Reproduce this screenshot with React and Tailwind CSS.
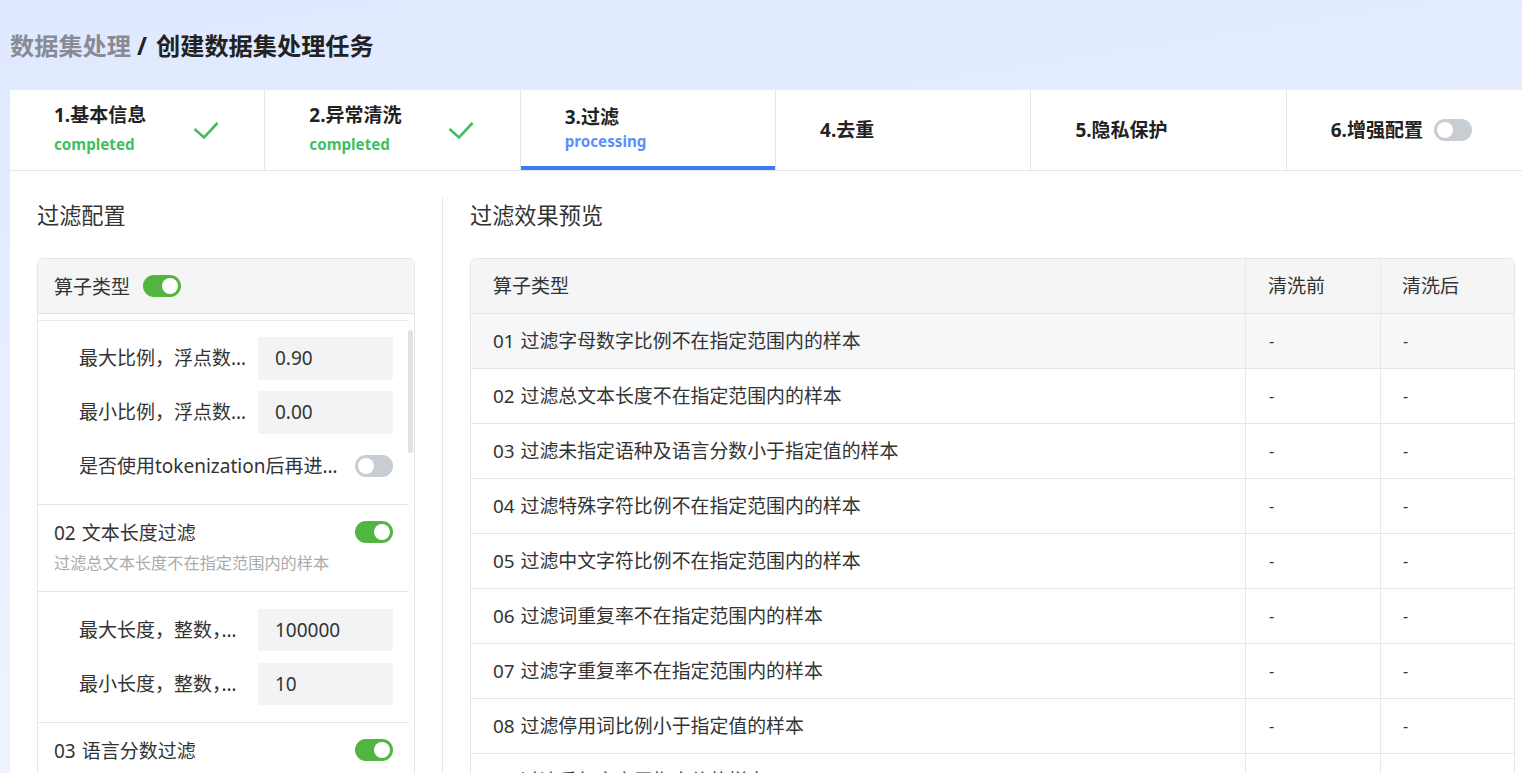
import React from 'react';

const Toggle = ({ on }) => (
  <div className={`flex h-[22px] w-[38px] shrink-0 items-center rounded-full px-[3px] ${on ? 'justify-end bg-[#52b541]' : 'justify-start bg-[#c8ccd3]'}`}>
    <div className="h-4 w-4 rounded-full bg-white" />
  </div>
);

const Check = () => (
  <svg width="28" height="20" viewBox="0 0 28 20" fill="none" className="shrink-0">
    <path d="M2.5 9 L12 17.5 L25.5 3" stroke="#3fbf62" strokeWidth="2.6" />
  </svg>
);

const steps = [
  { title: '1.基本信息', sub: 'completed', done: true },
  { title: '2.异常清洗', sub: 'completed', done: true },
  { title: '3.过滤', sub: 'processing', active: true },
  { title: '4.去重' },
  { title: '5.隐私保护' },
  { title: '6.增强配置', toggle: true },
];

const rows = [
  '01 过滤字母数字比例不在指定范围内的样本',
  '02 过滤总文本长度不在指定范围内的样本',
  '03 过滤未指定语种及语言分数小于指定值的样本',
  '04 过滤特殊字符比例不在指定范围内的样本',
  '05 过滤中文字符比例不在指定范围内的样本',
  '06 过滤词重复率不在指定范围内的样本',
  '07 过滤字重复率不在指定范围内的样本',
  '08 过滤停用词比例小于指定值的样本',
  '09 过滤重复率高于指定值的样本',
];

const Field = ({ label, value, tall }) => (
  <div className={`flex items-center justify-between ${tall ? 'h-[43px]' : 'h-[42px]'}`}>
    <div className="w-[172px] truncate text-[19px] text-[#333]">{label}</div>
    <div className="flex h-full w-[135px] items-center rounded-[3px] bg-[#f2f3f5] pl-[17px] text-[19px] text-[#333]">{value}</div>
  </div>
);

const Step = ({ step }) => (
  <div className="relative flex h-full w-[255.35px] shrink-0 items-center border-r border-[#e8e9eb] pl-[44px]">
    <div className={step.done || step.active ? `-translate-y-[2px] ${step.done ? 'w-[138px]' : ''}` : ''}>
      <div className="text-[19px] font-bold leading-[26px] text-[#222]">{step.title}</div>
      {step.sub && (
        <div className={`text-[15.2px] font-bold leading-[22px] ${step.active ? 'text-[#5b8ff9]' : 'mt-[5px] text-[#3fbf62]'}`}>{step.sub}</div>
      )}
    </div>
    {step.done && <Check />}
    {step.toggle && <div className="ml-[11px]"><Toggle /></div>}
    {step.active && <div className="absolute bottom-0 left-0 right-0 h-1 bg-[#3b7bf6]" />}
  </div>
);

export default function App() {
  return (
    <div className="h-[773px] w-full overflow-hidden bg-[linear-gradient(171deg,#dfe9ff,#f2f6ff)] font-['Noto_Sans','Noto_Sans_CJK_SC',sans-serif]">
      <div className="flex h-[90px] items-center pl-[10px] pt-[2px] text-[24.2px] font-bold text-[#222]">
        <span className="text-[#888b94]">数据集处理</span>
        <span className="ml-[6px]">/</span>
        <span className="ml-[9px]">创建数据集处理任务</span>
      </div>

      <div className="ml-[10px] h-[683px] bg-white">
        <div className="flex h-[81px] overflow-hidden border-b border-[#e5e6e8]">
          {steps.map(s => <Step key={s.title} step={s} />)}
        </div>

        <div className="flex pt-[27px]">
          <div className="w-[433px] shrink-0 border-r border-[#e5e6e8] px-[27px]">
            <h2 className="h-[60px] text-[22.2px] font-normal leading-[35px] text-[#333]">过滤配置</h2>
            <div className="relative h-[600px] w-[378px] overflow-hidden rounded-t-[6px] border border-[#e5e6e8]">
              <div className="flex h-[55px] items-center gap-[13px] border-b border-[#e0e1e3] bg-[#f5f5f5] pl-4 text-[19px] text-[#333]">
                <span className="pt-[2px]">算子类型</span>
                <Toggle on />
              </div>
              <div className="mr-[5px]">
                <div className="mt-[6px] border-t border-[#e8e9eb] pb-[27px] pl-[41px] pr-[16px] pt-4">
                  <div className="flex flex-col gap-[11px]">
                    <Field tall label="最大比例，浮点数类型，范围" value="0.90" />
                    <Field tall label="最小比例，浮点数类型，范围" value="0.00" />
                  </div>
                  <div className="mt-[21px] flex items-center justify-between">
                    <div className="w-[262px] truncate text-[19px] leading-[22px] text-[#333]">是否使用tokenization后再进行计算</div>
                    <Toggle />
                  </div>
                </div>
                <div className="border-t border-[#e5e6e8] px-4 pb-[17px] pt-4">
                  <div className="flex h-[22px] items-center justify-between text-[19px] text-[#333] [word-spacing:1px]">
                    <span className="pt-[2px]">02 文本长度过滤</span>
                    <Toggle on />
                  </div>
                  <div className="mt-[9px] text-[16.2px] leading-[22px] text-[#aaa]">过滤总文本长度不在指定范围内的样本</div>
                </div>
                <div className="border-t border-[#e5e6e8] pb-[17px] pl-[41px] pr-[16px] pt-[17px]">
                  <div className="flex flex-col gap-3">
                    <Field label="最大长度，整数，　范围为正整数" value="100000" />
                    <Field label="最小长度，整数，　范围为正整数" value="10" />
                  </div>
                </div>
                <div className="border-t border-[#e5e6e8] px-4 pb-4 pt-4">
                  <div className="flex h-[22px] items-center justify-between text-[19px] text-[#333] [word-spacing:1px]">
                    <span className="pt-[2px]">03 语言分数过滤</span>
                    <Toggle on />
                  </div>
                </div>
              </div>
              <div className="absolute right-[1px] top-[71px] h-[123px] w-[5px] rounded bg-[#e2e2e2]" />
            </div>
          </div>

          <div className="pl-[27px]">
            <h2 className="h-[60px] text-[22.2px] font-normal leading-[35px] text-[#333]">过滤效果预览</h2>
            <div className="w-[1045px] overflow-hidden rounded-t-[6px] border border-[#e5e6e8]">
              <div className="flex h-[55px] items-center border-b border-[#e5e6e8] bg-[#f5f5f5] text-[19px] text-[#333]">
                <div className="w-[774px] pl-[22px] pt-[1px]">算子类型</div>
                <div className="flex h-full w-[135px] items-center border-l border-[#e8e9eb] pl-[22px] pt-[1px]">清洗前</div>
                <div className="flex h-full flex-1 items-center border-l border-[#e8e9eb] pl-[21px] pt-[1px]">清洗后</div>
              </div>
              {rows.map((r, i) => (
                <div key={r} className={`flex h-[55px] items-center border-b border-[#e5e6e8] text-[18.9px] text-[#333] [word-spacing:1px] ${i === 0 ? 'bg-[#f6f7f9]' : ''}`}>
                  <div className="w-[774px] pl-[22px] pt-[1px]">{r}</div>
                  <div className="flex h-full w-[135px] items-center border-l border-[#e8e9eb] pl-[23px] text-[16px]">-</div>
                  <div className="flex h-full flex-1 items-center border-l border-[#e8e9eb] pl-[22px] text-[16px]">-</div>
                </div>
              ))}
            </div>
          </div>
        </div>
      </div>
    </div>
  );
}
